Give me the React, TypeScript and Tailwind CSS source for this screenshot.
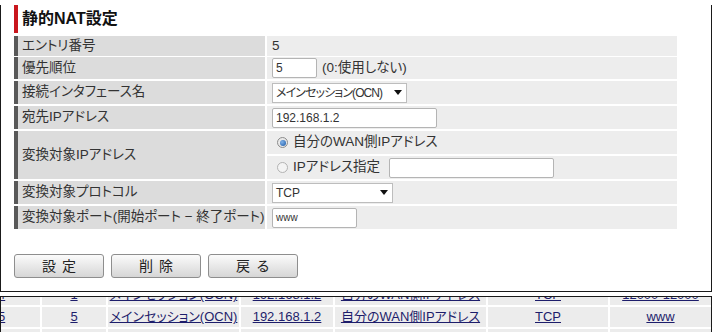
import type { ReactNode } from "react";

const labelCls =
  "flex items-center border-l-[4px] border-[#595959] bg-[#dcdcdc] pl-[4px] text-[13.5px] text-[#333] [font-feature-settings:'palt']";
const valueCls = "flex items-center bg-[#ededed] pl-[5px] text-[13.5px] text-[#333] [font-feature-settings:'palt']";

function Row({ label, h, children }: { label: string; h: string; children: ReactNode }) {
  return (
    <div className={`grid grid-cols-[251px_410px] gap-x-[2px] ${h}`}>
      <div className={labelCls}>{label}</div>
      <div className={valueCls}>{children}</div>
    </div>
  );
}

function TextBox({ w, value, small }: { w: string; value?: string; small?: boolean }) {
  return (
    <div
      className={`flex h-[20px] items-center rounded-[2px] border border-[#b4b4b4] bg-white pl-[3px] ${w} ${
        small ? "text-[10px]" : "text-[12px]"
      }`}
    >
      {value}
    </div>
  );
}

function SelectBox({ w, value, tight }: { w: string; value: string; tight?: boolean }) {
  return (
    <div
      className={`flex h-[20px] items-center justify-between border border-[#bdbdbd] bg-white pl-[3px] pr-[4px] text-[12px] [font-feature-settings:'palt'] ${w} ${
        tight ? "tracking-[-0.9px]" : ""
      }`}
    >
      <span>{value}</span>
      <span className="h-0 w-0 border-x-[4px] border-t-[5px] border-x-transparent border-t-[#111]" />
    </div>
  );
}

function Radio({ checked }: { checked?: boolean }) {
  return checked ? (
    <span className="ml-[5px] flex h-[11px] w-[11px] items-center justify-center rounded-full border border-[#8c8c8c] bg-[#e9e9e9]">
      <span className="h-[6px] w-[6px] rounded-full bg-[radial-gradient(circle_at_35%_35%,#7fb2ea,#1c58a4)]" />
    </span>
  ) : (
    <span className="ml-[5px] h-[11px] w-[11px] rounded-full border border-[#b3b3b3] bg-[#f4f4f4]" />
  );
}

function Btn({ label }: { label: string }) {
  return (
    <button
      type="button"
      className="flex h-[24px] w-[90px] items-center justify-center rounded-[3px] border border-[#8e8e8e] bg-gradient-to-b from-[#fbfbfb] to-[#d6d6d6] pl-[6px] text-[14px] tracking-[6px] text-[#222]"
    >
      {label}
    </button>
  );
}

const cols = ["w-[39px]", "w-[64px]", "w-[131px]", "w-[92px]", "w-[151px]", "w-[120px]", "w-[101px]"];

function BgRow({ cells }: { cells: string[] }) {
  return (
    <div className="flex h-[20px] gap-x-[2px]">
      {cells.map((c, i) => (
        <div
          key={i}
          className={`flex items-center bg-[#ececec] text-[13px] text-[#1d1d6b] [font-feature-settings:'palt'] ${cols[i]} ${
            i === 0 ? "justify-start" : "justify-center"
          }`}
        >
          <span className={`underline ${i === 0 ? "-ml-[3px]" : ""}`}>{c}</span>
        </div>
      ))}
    </div>
  );
}

export default function App() {
  return (
    <div className="h-[332px] w-[713px] overflow-hidden bg-white font-['Liberation_Sans','Noto_Sans_CJK_JP',sans-serif]">
      <div className="h-[287px] w-[712px] border-x border-b border-[#1a1a1a] pl-[13px]">
        <div className="mt-[5px] flex h-[28px] items-center">
          <div className="h-full w-[4px] bg-[#c9161d]" />
          <h1 className="ml-[4px] text-[16px] font-bold text-[#111] [font-feature-settings:'palt']">静的NAT設定</h1>
        </div>

        <div className="mt-[3px] flex w-[663px] flex-col gap-y-[2px]">
          <Row label="エントリ番号" h="h-[19px]">
            5
          </Row>
          <Row label="優先順位" h="h-[22px]">
            <TextBox w="w-[45px]" value="5" />
            <span className="ml-[5px]">(0:使用しない)</span>
          </Row>
          <Row label="接続インタフェース名" h="h-[23px]">
            <SelectBox w="w-[135px]" value="メインセッション(OCN)" tight />
          </Row>
          <Row label="宛先IPアドレス" h="h-[23px]">
            <TextBox w="w-[165px]" value="192.168.1.2" />
          </Row>
          <div className="grid h-[48px] grid-cols-[251px_410px] gap-x-[2px]">
            <div className={labelCls}>変換対象IPアドレス</div>
            <div className="flex flex-col gap-y-[2px]">
              <div className={`${valueCls} h-[23px]`}>
                <Radio checked />
                <span className="ml-[5px]">自分のWAN側IPアドレス</span>
              </div>
              <div className={`${valueCls} h-[23px]`}>
                <Radio />
                <span className="ml-[5px]">IPアドレス指定</span>
                <div className="ml-[9px]">
                  <TextBox w="w-[165px]" />
                </div>
              </div>
            </div>
          </div>
          <Row label="変換対象プロトコル" h="h-[23px]">
            <SelectBox w="w-[121px]" value="TCP" />
          </Row>
          <Row label="変換対象ポート(開始ポート − 終了ポート)" h="h-[23px]">
            <TextBox w="w-[85px]" value="www" small />
          </Row>
        </div>

        <div className="mt-[25px] flex gap-x-[7px]">
          <Btn label="設定" />
          <Btn label="削除" />
          <Btn label="戻る" />
        </div>
      </div>

      <div className="mt-[4px] h-[41px] w-[712px] overflow-hidden border border-[#1a1a1a]">
        <div className="-mt-[12px] flex flex-col gap-y-[2px]">
          <BgRow cells={["4", "1", "メインセッション(OCN)", "192.168.1.2", "自分のWAN側IPアドレス", "TCP", "12000-12000"]} />
          <BgRow cells={["5", "5", "メインセッション(OCN)", "192.168.1.2", "自分のWAN側IPアドレス", "TCP", "www"]} />
          <BgRow cells={["6", "", "", "", "", "", ""]} />
        </div>
      </div>
    </div>
  );
}
